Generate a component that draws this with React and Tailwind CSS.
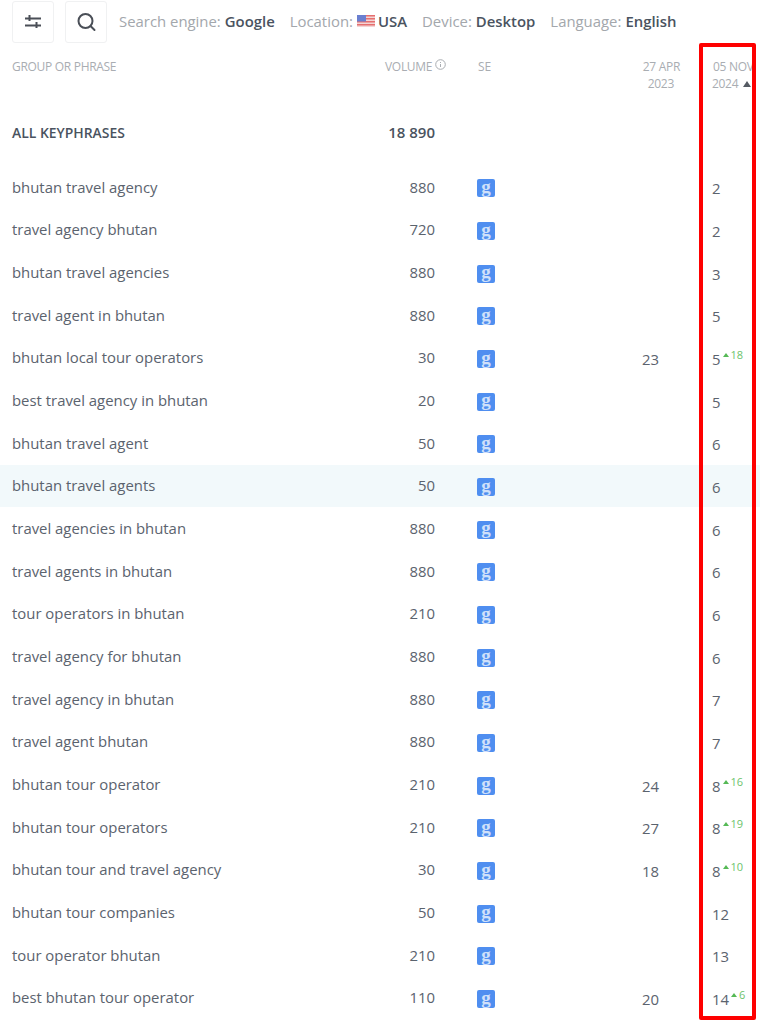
import React from "react";

const rows = [
  ["bhutan travel agency", "880", "", "2", ""],
  ["travel agency bhutan", "720", "", "2", ""],
  ["bhutan travel agencies", "880", "", "3", ""],
  ["travel agent in bhutan", "880", "", "5", ""],
  ["bhutan local tour operators", "30", "23", "5", "18"],
  ["best travel agency in bhutan", "20", "", "5", ""],
  ["bhutan travel agent", "50", "", "6", ""],
  ["bhutan travel agents", "50", "", "6", ""],
  ["travel agencies in bhutan", "880", "", "6", ""],
  ["travel agents in bhutan", "880", "", "6", ""],
  ["tour operators in bhutan", "210", "", "6", ""],
  ["travel agency for bhutan", "880", "", "6", ""],
  ["travel agency in bhutan", "880", "", "7", ""],
  ["travel agent bhutan", "880", "", "7", ""],
  ["bhutan tour operator", "210", "24", "8", "16"],
  ["bhutan tour operators", "210", "27", "8", "19"],
  ["bhutan tour and travel agency", "30", "18", "8", "10"],
  ["bhutan tour companies", "50", "", "12", ""],
  ["tour operator bhutan", "210", "", "13", ""],
  ["best bhutan tour operator", "110", "20", "14", "6"],
];

function GoogleBadge() {
  return (
    <div className="w-[18px] h-[18px] rounded-[2px] bg-[#4f8ef0] flex items-center justify-center">
      <span className="text-[19px] leading-none font-bold text-[#cfe0fa] font-['Liberation_Serif',serif] -mt-[4px]">
        g
      </span>
    </div>
  );
}

function Flag() {
  return (
    <svg width="18" height="12" viewBox="0 0 18 12" className="mr-[3px]">
      <rect width="18" height="12" fill="#f3d5d5" />
      <rect y="0" width="18" height="1.5" fill="#e66f6f" />
      <rect y="3" width="18" height="1.5" fill="#e66f6f" />
      <rect y="6" width="18" height="1.5" fill="#e66f6f" />
      <rect y="9" width="18" height="1.5" fill="#e66f6f" />
      <rect width="9" height="6.5" fill="#6a7fd0" />
    </svg>
  );
}

function Meta({ label, value, flag }) {
  return (
    <div className="flex items-center gap-[4px] text-[14.9px]">
      <span className="text-[#a3a7ac]">{label}</span>
      {flag && <Flag />}
      <span className={`font-semibold text-[#4a5360] ${flag ? "-ml-[4px]" : ""}`}>{value}</span>
    </div>
  );
}

export default function App() {
  return (
    <div className="relative w-[760px] h-[1024px] overflow-hidden bg-white font-['Open_Sans',sans-serif] text-[#5b636e]">
      <div className="flex items-center h-[43px]">
        <div className="ml-[12px] w-[42px] h-[42px] border border-[#f0f1f2] rounded-[3px] flex items-center justify-center">
          <svg width="16" height="16" viewBox="0 0 16 16" fill="none" stroke="#4a4f57" strokeWidth="2">
            <path d="M0 4.5h16M0 11.5h16" />
            <path d="M4.5 1v6M11.5 8v6" />
          </svg>
        </div>
        <div className="ml-[11px] w-[42px] h-[42px] border border-[#f0f1f2] rounded-[3px] flex items-center justify-center">
          <svg width="20" height="20" viewBox="0 0 20 20" fill="none" stroke="#4a4f57" strokeWidth="2" strokeLinecap="round">
            <circle cx="9.5" cy="9" r="7" />
            <path d="M14.5 14l4 4" />
          </svg>
        </div>
        <div className="ml-[12px] flex items-center gap-[15px]">
          <Meta label="Search engine:" value="Google" />
          <Meta label="Location:" value="USA" flag />
          <Meta label="Device:" value="Desktop" />
          <Meta label="Language:" value="English" />
        </div>
      </div>

      <div className="flex h-[64px] pt-[15px] text-[12px] leading-[17px] text-[#a9adb2]">
        <div className="w-[375px] pl-[12px] tracking-[-0.3px]">GROUP OR PHRASE</div>
        <div className="w-[72px] pl-[10px] flex items-start gap-[3px] tracking-[-0.3px]">
          VOLUME
          <svg width="11" height="11" viewBox="0 0 11 11" fill="none" stroke="#a9adb2" className="mt-[1px]">
            <circle cx="5.5" cy="5.5" r="4.8" />
            <path d="M5.5 3v1M5.5 5v3" />
          </svg>
        </div>
        <div className="w-[31px] pl-[31px]">SE</div>
        <div className="w-[202px] text-right tracking-[-0.3px]">
          27 APR
          <br />
          <span className="pr-[6px]">2023</span>
        </div>
        <div className="ml-[33px] w-[47px] whitespace-nowrap tracking-[-0.3px]">
          05 NOV
          <br />
          <span className="-ml-[1px] flex items-center gap-[5px]">
            2024
            <span className="w-0 h-0 border-x-[4px] border-x-transparent border-b-[6px] border-b-[#555b63]" />
          </span>
        </div>
      </div>

      <div className="flex items-center h-[59px] pb-[8px] font-semibold text-[#4a5360]">
        <div className="w-[375px] pl-[12px] text-[13.9px] mt-[2px]">ALL KEYPHRASES</div>
        <div className="w-[60px] text-right text-[15px]">18 890</div>
      </div>

      <div>
        {rows.map((r, i) => (
          <div
            key={i}
            className={`flex items-center h-[42.68px] text-[14.9px] ${i === 7 ? "bg-[#f2f9fb]" : ""}`}
          >
            <div className="w-[375px] pl-[12px] -mt-[1px]">{r[0]}</div>
            <div className="w-[60px] text-right -mt-[1px]">{r[1]}</div>
            <div className="ml-[42px] w-[18px] mt-[2px]">
              <GoogleBadge />
            </div>
            <div className="w-[164px] text-right mt-[2px]">{r[2]}</div>
            <div className="ml-[53px] mt-[2px] flex items-start">
              <span>{r[3]}</span>
              {r[4] && (
                <span className="ml-[2px] flex items-center gap-[2px] text-[11px] leading-[14px] text-[#6cc36c]">
                  <span className="w-0 h-0 border-x-[3px] border-x-transparent border-b-[4px] border-b-[#55b955]" />
                  {r[4]}
                </span>
              )}
            </div>
          </div>
        ))}
      </div>

      <div className="absolute left-[699px] top-[43px] w-[57px] h-[977px] border-[4px] border-[#fe0000] rounded-[2px]" />
    </div>
  );
}
